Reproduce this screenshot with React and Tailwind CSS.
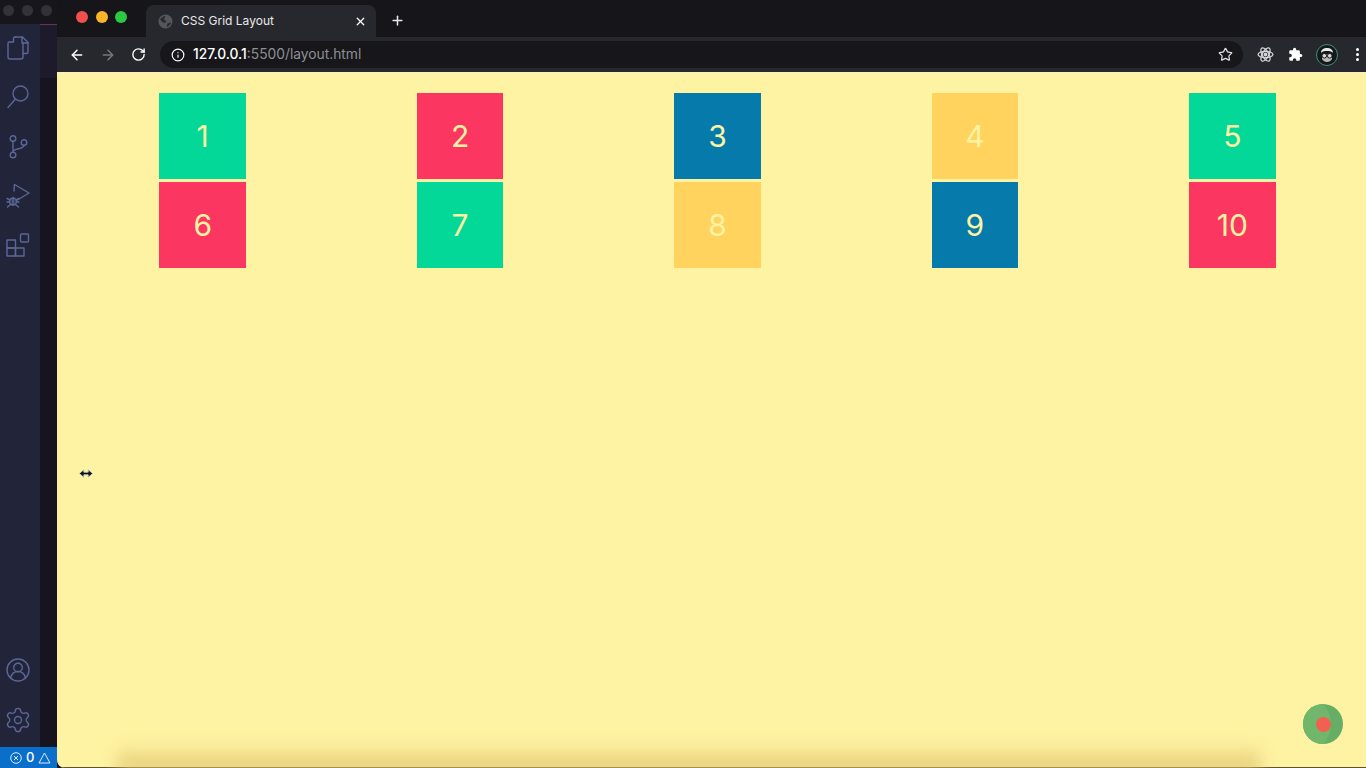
import React from 'react';
import { ArrowLeft, ArrowRight, RotateCw, Info, Star, X, Plus, Settings } from 'lucide-react';

const cells = [
  { n: 1, bg: 'bg-[#04d898]' },
  { n: 2, bg: 'bg-[#fb3660]' },
  { n: 3, bg: 'bg-[#067aab]' },
  { n: 4, bg: 'bg-[#ffd35e]' },
  { n: 5, bg: 'bg-[#04d898]' },
  { n: 6, bg: 'bg-[#fb3660]' },
  { n: 7, bg: 'bg-[#04d898]' },
  { n: 8, bg: 'bg-[#ffd35e]' },
  { n: 9, bg: 'bg-[#067aab]' },
  { n: 10, bg: 'bg-[#fb3660]' },
];

// VS Code activity bar icons
const stroke = { fill: 'none', stroke: 'currentColor', strokeWidth: 1.4, strokeLinecap: 'round', strokeLinejoin: 'round' };

const FilesIcon = () => (
  <svg width="22" height="24" viewBox="0 0 22 24" {...stroke}>
    <path d="M8 1h7.500L21 6.500V16a1.500 1.500 0 0 1-1.500 1.500H16" />
    <path d="M15 1v6h6" />
    <path d="M8 1a1.500 1.500 0 0 0-1.500 1.500V6H2.500A1.500 1.500 0 0 0 1 7.500V21a2 2 0 0 0 2 2h11a2 2 0 0 0 2-2V7" />
  </svg>
);
const SearchIcon = () => (
  <svg width="22" height="24" viewBox="0 0 22 24" {...stroke}>
    <circle cx="13.500" cy="8.500" r="7.500" />
    <path d="M8.500 14 1 22.500" />
  </svg>
);
const BranchIcon = () => (
  <svg width="20" height="24" viewBox="0 0 20 24" {...stroke}>
    <circle cx="5" cy="3.500" r="2.800" />
    <circle cx="5" cy="20" r="2.800" />
    <circle cx="16" cy="7.500" r="2.800" />
    <path d="M5 6.500v10.500M16 10.500c0 4-11 2.500-11 6.500" />
  </svg>
);
const DebugIcon = () => (
  <svg width="24" height="26" viewBox="0 0 24 26" {...stroke}>
    <path d="M8 8 8.500 1.500 23 10 11.500 17" />
    <circle cx="7" cy="18.500" r="3.500" fill="currentColor" fillOpacity="0.35" />
    <path d="M7 15v7M1 15.500l3 1.500M13 15.500l-3 1.500M1 19h2.500M13 19h-2.500M1.500 24l3-2.500M12.500 24l-3-2.500" />
  </svg>
);
const ExtensionsIcon = () => (
  <svg width="24" height="24" viewBox="0 0 24 24" {...stroke}>
    <rect x="1" y="7" width="8.500" height="8" />
    <rect x="1" y="15" width="8.500" height="8" />
    <rect x="9.500" y="15" width="8.500" height="8" />
    <rect x="14.500" y="1" width="8" height="8" rx="1" />
  </svg>
);
const AccountIcon = () => (
  <svg width="24" height="24" viewBox="0 0 24 24" {...stroke}>
    <circle cx="12" cy="12" r="11" />
    <circle cx="12" cy="9.500" r="4.300" />
    <path d="M4.500 20c1-4 4-6.500 7.500-6.500s6.500 2.500 7.500 6.500" />
  </svg>
);

const FaviconGlobe = () => (
  <svg width="15" height="15" viewBox="0 0 15 15">
    <circle cx="7.500" cy="7.500" r="7" fill="#55565b" />
    <path d="M2 5c2-1 3-3 5-3 1 1-1 2-1 3s2 1 2 2.500S6 9 5 8.500 3 7 2 5zM9 10c1-1 3-1.500 4-1.500-.5 2-2 4-4 4.500-.8-1 .5-2 0-3z" fill="#2a2a30" />
  </svg>
);

const ReactIcon = () => (
  <svg width="17" height="17" viewBox="0 0 24 24" fill="none" stroke="#d4d4d8" strokeWidth="1.800">
    <ellipse cx="12" cy="12" rx="10.500" ry="4.500" />
    <ellipse cx="12" cy="12" rx="10.500" ry="4.500" transform="rotate(60 12 12)" />
    <ellipse cx="12" cy="12" rx="10.500" ry="4.500" transform="rotate(120 12 12)" />
    <circle cx="12" cy="12" r="1.800" fill="#d4d4d8" />
  </svg>
);

const PuzzleIcon = () => (
  <svg width="15" height="15" viewBox="0 0 24 24" fill="currentColor">
    <path d="M20.500 11H19V7a2 2 0 0 0-2-2h-4V3.500a2.500 2.500 0 0 0-5 0V5H4a2 2 0 0 0-2 2v3.800h1.500a2.700 2.700 0 0 1 0 5.400H2V20a2 2 0 0 0 2 2h3.800v-1.500a2.700 2.700 0 0 1 5.400 0V22H17a2 2 0 0 0 2-2v-4h1.500a2.500 2.500 0 0 0 0-5z" />
  </svg>
);

const Avatar = () => (
  <div className="w-[22px] h-[22px] rounded-full border border-[#3f8f74] bg-[#14181a] flex items-center justify-center overflow-hidden">
    <svg width="20" height="20" viewBox="0 0 20 20" fill="none">
      <path d="M4 8c0-3.500 2.500-5 6-5s6 1.500 6 5c-1-1.500-3-2-6-2s-5 .5-6 2z" fill="#e8e8e8" />
      <path d="M5 9v5c1 2 3 3 5 3s4-1 5-3V9z" fill="#b9b9b9" />
      <circle cx="7.300" cy="10.800" r="2.300" fill="#d8d8d8" stroke="#1a1a1a" strokeWidth="1" />
      <circle cx="12.700" cy="10.800" r="2.300" fill="#d8d8d8" stroke="#1a1a1a" strokeWidth="1" />
    </svg>
  </div>
);

const App = () => {
  return (
    <div className="relative flex w-full h-screen overflow-hidden bg-[#15141f] font-['Inter','Liberation_Sans',sans-serif]">
      {/* Editor behind the browser */}
      <div className="w-[57px] shrink-0 flex flex-col">
        <div className="h-[24px] shrink-0 bg-[#17161c] flex items-center gap-[8px] pl-[3px] pb-[4px]">
          <div className="w-[11px] h-[11px] rounded-full bg-[#333337]" />
          <div className="w-[11px] h-[11px] rounded-full bg-[#333337]" />
          <div className="w-[11px] h-[11px] rounded-full bg-[#333337]" />
        </div>
        <div className="flex flex-1 min-h-0">
          <div className="w-[40px] shrink-0 bg-[#22243a] flex flex-col items-center text-[#5c6796] pt-[12px] pb-[13px] pr-[4px]">
            <FilesIcon />
            <div className="mt-[25px]"><SearchIcon /></div>
            <div className="mt-[26px]"><BranchIcon /></div>
            <div className="mt-[24px]"><DebugIcon /></div>
            <div className="mt-[24px]"><ExtensionsIcon /></div>
            <div className="mt-auto"><AccountIcon /></div>
            <div className="mt-[24px]"><Settings size={28} strokeWidth={1.200} /></div>
          </div>
          <div className="flex-1 bg-[#15141f] flex flex-col">
            <div className="h-[54px] bg-[#1d1b2b] border-t border-[#6b3350]" />
          </div>
        </div>
        <div className="h-[21px] shrink-0 bg-[#0a6fca] flex items-center gap-[4px] pl-[10px] text-white text-[13px]">
          <svg width="12" height="12" viewBox="0 0 12 12" fill="none" stroke="#dbe9ff" strokeWidth="1">
            <circle cx="6" cy="6" r="5.300" />
            <path d="m4 4 4 4M8 4l-4 4" />
          </svg>
          <span className="leading-none font-medium">0</span>
          <svg width="13" height="12" viewBox="0 0 13 12" fill="none" stroke="#dbe9ff" strokeWidth="1">
            <path d="M6.500 1 12 11H1z" />
          </svg>
        </div>
      </div>

      {/* Browser window */}
      <div className="flex-1 min-w-0 flex flex-col rounded-l-[8px] overflow-hidden">
        <div className="h-[37px] shrink-0 bg-[#15151a] flex items-end pl-[19px]">
          <div className="flex items-center gap-[7.500px] self-center -mt-[3px]">
            <div className="w-[12px] h-[12px] rounded-full bg-[#f2504d]" />
            <div className="w-[12px] h-[12px] rounded-full bg-[#fbb427]" />
            <div className="w-[12px] h-[12px] rounded-full bg-[#2ac93f]" />
          </div>
          <div className="ml-[19px] w-[230px] h-[32px] bg-[#27282d] rounded-t-[8px] flex items-center pl-[12px] pr-[9px]">
            <FaviconGlobe />
            <span className="ml-[8px] flex-1 text-[12px] text-[#e8e8ea] leading-none">CSS Grid Layout</span>
            <X size={13} strokeWidth={2.4} className="text-white" />
          </div>
          <Plus size={15} strokeWidth={2.4} className="ml-[14px] mb-[9px] text-[#e8e8ea]" />
        </div>
        <div className="h-[35px] shrink-0 bg-[#27282d] flex items-center pl-[12px] pr-[7px]">
          <ArrowLeft size={16} strokeWidth={2.2} className="text-white" />
          <ArrowRight size={16} strokeWidth={2.2} className="ml-[15px] text-[#77787c]" />
          <RotateCw size={15} strokeWidth={2.2} className="ml-[15px] text-white" />
          <div className="ml-[14px] flex-1 h-[27px] bg-[#17171b] rounded-full flex items-center pl-[11px] pr-[10px]">
            <Info size={14} strokeWidth={2} className="text-white" />
            <span className="ml-[8px] flex-1 text-[13.800px] leading-none text-[#8e8f93]">
              <span className="text-white font-medium">127.0.0.1</span>:5500/layout.html
            </span>
            <Star size={15} strokeWidth={2} className="text-[#dedede]" />
          </div>
          <div className="ml-[14px]"><ReactIcon /></div>
          <div className="ml-[14px] text-white"><PuzzleIcon /></div>
          <div className="ml-[13px]"><Avatar /></div>
          <div className="ml-[18px] flex flex-col gap-[2px]">
            <div className="w-[3px] h-[3px] rounded-full bg-white" />
            <div className="w-[3px] h-[3px] rounded-full bg-white" />
            <div className="w-[3px] h-[3px] rounded-full bg-white" />
          </div>
        </div>
        <div className="h-[1px] shrink-0 bg-[#f6f1c9]" />

        {/* Page content */}
        <div className="relative flex-1 min-h-0 bg-[#fef3a2] pt-[20px] pl-[17px] pr-[5px] border-b border-[#5a5330]">
          <div className="grid grid-cols-5 gap-y-[3px] justify-items-center">
            {cells.map((c) => (
              <div
                key={c.n}
                className={`w-[86.500px] h-[86px] flex items-center justify-center text-[30px] leading-none text-[#fdf3a4] ${c.bg}`}
              >
                {c.n}
              </div>
            ))}
          </div>

          {/* Recording badge */}
          <div className="absolute right-[23px] bottom-[23px] w-[40px] h-[40px] rounded-full overflow-hidden bg-[#66ae66] flex items-center justify-center">
            <div className="absolute -left-[32px] -top-[10px] w-[60px] h-[60px] rounded-full bg-[#70b66b]" />
            <div className="relative w-[15px] h-[15px] rounded-full bg-[#f4604f]" />
          </div>

          {/* Resize cursor */}
          <svg className="absolute left-[21px] top-[395px]" width="16" height="11" viewBox="0 0 14 10">
            <path d="M1 5 5 1.500v2.300h4V1.500L13 5 9 8.500V6.200H5v2.300z" fill="#111" stroke="#ccc" strokeWidth="0.800" />
          </svg>

          {/* Soft shadow along the bottom edge */}
          <div className="absolute left-[60px] right-[105px] -bottom-[6px] h-[30px] bg-gradient-to-t from-[#dfc36f] to-transparent blur-[8px]" />
        </div>
      </div>
    </div>
  );
};

export default App;
